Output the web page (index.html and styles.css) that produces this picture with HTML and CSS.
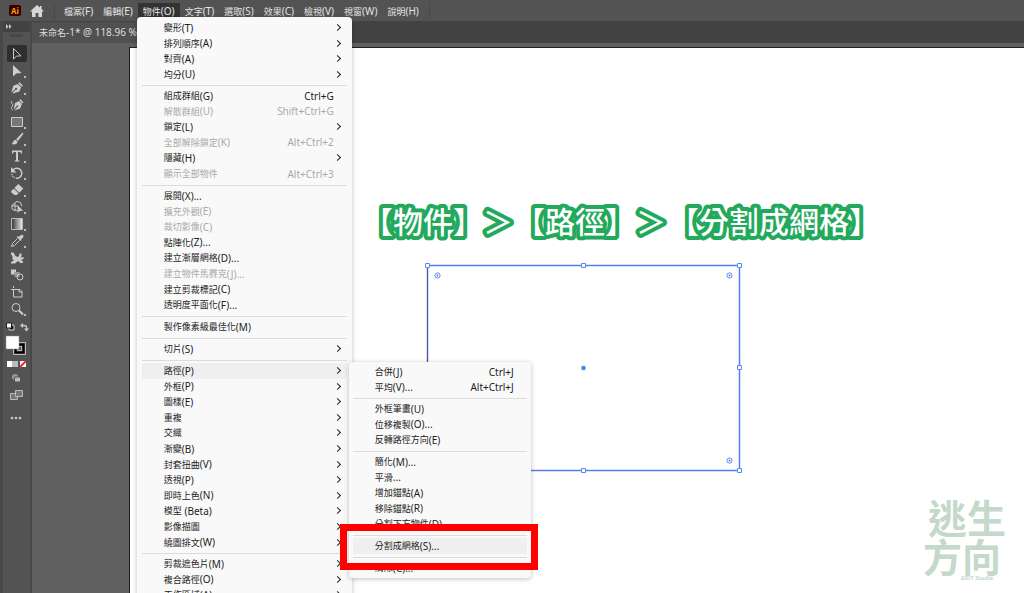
FILE: index.html
```html
<!DOCTYPE html>
<html lang="zh-Hant">
<head>
<meta charset="utf-8">
<title>未命名-1</title>
<link rel="stylesheet" href="styles.css">
</head>
<body>
<header class="menubar">
  <span class="app-logo">Ai</span>
  <button class="home" aria-label="首頁"><svg viewBox="0 0 14 12"><path d="M7 0 0 6.4h2V12h3.6V8h2.8v4H12V6.4h2L11.6 4V1H10v1.6z"/></svg></button>
  <nav class="menus">
    <button class="menu-title">檔案<kbd>(F)</kbd></button>
    <button class="menu-title">編輯<kbd>(E)</kbd></button>
    <div class="menu-anchor">
      <button class="menu-title open">物件<kbd>(O)</kbd></button>
      <div class="menu main-menu">
        <ul class="group">
          <li><button class="item more">變形<kbd>(T)</kbd></button></li>
          <li><button class="item more">排列順序<kbd>(A)</kbd></button></li>
          <li><button class="item more">對齊<kbd>(A)</kbd></button></li>
          <li><button class="item more">均分<kbd>(U)</kbd></button></li>
        </ul>
        <ul class="group">
          <li><button class="item">組成群組<kbd>(G)</kbd><kbd class="key">Ctrl+G</kbd></button></li>
          <li><button class="item" disabled>解散群組<kbd>(U)</kbd><kbd class="key">Shift+Ctrl+G</kbd></button></li>
          <li><button class="item more">鎖定<kbd>(L)</kbd></button></li>
          <li><button class="item" disabled>全部解除鎖定<kbd>(K)</kbd><kbd class="key">Alt+Ctrl+2</kbd></button></li>
          <li><button class="item more">隱藏<kbd>(H)</kbd></button></li>
          <li><button class="item" disabled>顯示全部物件<kbd class="key">Alt+Ctrl+3</kbd></button></li>
        </ul>
        <ul class="group">
          <li><button class="item">展開<kbd>(X)...</kbd></button></li>
          <li><button class="item" disabled>擴充外觀<kbd>(E)</kbd></button></li>
          <li><button class="item" disabled>裁切影像<kbd>(C)</kbd></button></li>
          <li><button class="item">點陣化<kbd>(Z)...</kbd></button></li>
          <li><button class="item">建立漸層網格<kbd>(D)...</kbd></button></li>
          <li><button class="item" disabled>建立物件馬賽克<kbd>(J)...</kbd></button></li>
          <li><button class="item">建立剪裁標記<kbd>(C)</kbd></button></li>
          <li><button class="item">透明度平面化<kbd>(F)...</kbd></button></li>
        </ul>
        <ul class="group">
          <li><button class="item">製作像素級最佳化<kbd>(M)</kbd></button></li>
        </ul>
        <ul class="group">
          <li><button class="item more">切片<kbd>(S)</kbd></button></li>
        </ul>
        <ul class="group">
          <li class="parent"><button class="item more active">路徑<kbd>(P)</kbd></button>
            <div class="menu submenu">
              <ul class="group">
                <li><button class="item">合併<kbd>(J)</kbd><kbd class="key">Ctrl+J</kbd></button></li>
                <li><button class="item">平均<kbd>(V)...</kbd><kbd class="key">Alt+Ctrl+J</kbd></button></li>
              </ul>
              <ul class="group">
                <li><button class="item">外框筆畫<kbd>(U)</kbd></button></li>
                <li><button class="item">位移複製<kbd>(O)...</kbd></button></li>
                <li><button class="item">反轉路徑方向<kbd>(E)</kbd></button></li>
              </ul>
              <ul class="group">
                <li><button class="item">簡化<kbd>(M)...</kbd></button></li>
                <li><button class="item">平滑<kbd>...</kbd></button></li>
                <li><button class="item">增加錨點<kbd>(A)</kbd></button></li>
                <li><button class="item">移除錨點<kbd>(R)</kbd></button></li>
                <li><button class="item">分割下方物件<kbd>(D)</kbd></button></li>
              </ul>
              <ul class="group">
                <li class="parent"><button class="item active">分割成網格<kbd>(S)...</kbd></button><span class="callout"></span></li>
              </ul>
              <ul class="group">
                <li><button class="item">清除<kbd>(C)...</kbd></button></li>
              </ul>
            </div>
          </li>
          <li><button class="item more">外框<kbd>(P)</kbd></button></li>
          <li><button class="item more">圖樣<kbd>(E)</kbd></button></li>
          <li><button class="item more">重複</button></li>
          <li><button class="item more">交織</button></li>
          <li><button class="item more">漸變<kbd>(B)</kbd></button></li>
          <li><button class="item more">封套扭曲<kbd>(V)</kbd></button></li>
          <li><button class="item more">透視<kbd>(P)</kbd></button></li>
          <li><button class="item more">即時上色<kbd>(N)</kbd></button></li>
          <li><button class="item more">模型<kbd>&nbsp;(Beta)</kbd></button></li>
          <li><button class="item more">影像描圖</button></li>
          <li><button class="item more">繞圖排文<kbd>(W)</kbd></button></li>
        </ul>
        <ul class="group">
          <li><button class="item more">剪裁遮色片<kbd>(M)</kbd></button></li>
          <li><button class="item more">複合路徑<kbd>(O)</kbd></button></li>
          <li><button class="item more">工作區域<kbd>(A)</kbd></button></li>
        </ul>
      </div>
    </div>
    <button class="menu-title">文字<kbd>(T)</kbd></button>
    <button class="menu-title">選取<kbd>(S)</kbd></button>
    <button class="menu-title">效果<kbd>(C)</kbd></button>
    <button class="menu-title">檢視<kbd>(V)</kbd></button>
    <button class="menu-title">視窗<kbd>(W)</kbd></button>
    <button class="menu-title">說明<kbd>(H)</kbd></button>
  </nav>
</header>
<main class="workspace">
  <aside class="toolbox">
    <div class="toolbox-head"><svg viewBox="0 0 6 5"><path d="M0 0l2.5 2.5L0 5zM3 0l2.5 2.5L3 5z"/></svg></div>
    <div class="grip"></div>
    <div class="tools">
      <button class="tool selected" aria-label="選取"><svg viewBox="0 0 14 14"><path class="line" d="M3.500 1.500v10.500l3-2.800 4.500-.4z"/></svg></button>
      <button class="tool fly" aria-label="直接選取"><svg viewBox="0 0 14 14"><path d="M3 1v11.500l3.300-3.100 5.200-.4z"/></svg></button>
      <button class="tool fly" aria-label="鋼筆"><svg viewBox="0 0 14 14"><path d="M9.300 1l3.700 3.700-1.300 1.100-3.300-3.300zM7.800 3l3.300 3.300-1.700 4.200L3 12.500l-.5-.4 3.200-3.300a1 1 0 1 0-.6-.6L1.700 11.300l-.3-.5 2-6z"/></svg></button>
      <button class="tool" aria-label="曲線"><svg viewBox="0 0 14 14"><path d="M10.300 1l3.200 3.600-1.200.9-2.900-3.200zM9 2.900l2.900 3.200-1.700 4.400-5.800 2 3-3.600a.8.800 0 1 0-.7-.6L3.700 11.500l1.300-6.500z"/><path class="line" d="M2 3c-2.500 2 2 3 .5 5s-1.700 3 .5 4"/></svg></button>
      <button class="tool fly" aria-label="矩形"><svg viewBox="0 0 14 14"><path class="line box" d="M1.500 2.500h11v9h-11z"/></svg></button>
      <button class="tool fly" aria-label="筆刷"><svg viewBox="0 0 14 14"><path d="M13 .8c.8.600.2 1.400-.3 2L8 8.900 6.200 7.300 11.500 1.500c.5-.5 1-.9 1.500-.7zM5.600 7.800l1.900 1.700c.1 2.500-2.800 3.500-6 2.600 1.700-.8 1.500-4 4.100-4.300z"/></svg></button>
      <button class="tool fly" aria-label="文字"><svg viewBox="0 0 14 14"><path d="M2 1.500h10v3h-1l-.6-1.500H8v8.200l1.500.5v.8h-5v-.8l1.500-.5V3H3.600L3 4.500H2z"/></svg></button>
      <button class="tool fly" aria-label="旋轉"><svg viewBox="0 0 14 14"><path class="line bold" d="M3 4a5 5 0 1 1 3 8.200"/><path d="M1 1v5.500h5.500z"/><path class="line bold" d="M1.800 8a5 5 0 0 0 4 4.200" stroke-dasharray="1 1"/></svg></button>
      <button class="tool fly" aria-label="橡皮擦"><svg viewBox="0 0 14 14"><path d="M8.300 1l5 4.500-4 4.200-5-4.600zM3.700 5.800l4.900 4.500-1.800 1.800H4.300L1.200 9.200V8z"/></svg></button>
      <button class="tool fly" aria-label="形狀建立程式"><svg viewBox="0 0 14 14"><path class="line" d="M7 10.500H5a3.500 3.500 0 0 1-1-6.800 4 4 0 0 1 7.500 2.500M2 6h6M5 3v7"/><path d="M7.500 5v8l2-2 3.500-.3z"/></svg></button>
      <button class="tool fly" aria-label="漸層"><svg viewBox="0 0 14 14"><defs><linearGradient id="ramp"><stop stop-color="#333"/><stop offset="1" stop-color="#eee"/></linearGradient></defs><path d="M1.500 1.500h11v11h-11z" fill="url(#ramp)" stroke="#bbb"/></svg></button>
      <button class="tool fly" aria-label="檢色滴管"><svg viewBox="0 0 14 14"><path d="M10 2c1-1.300 2.200-1.500 3-.8s.6 2-.7 3l-1.200 1.100.6.700-1 1-4-4 1-1 .8.800z"/><path class="line" d="M7.300 4.700L2.500 9.500 1.500 12.500l3-1 4.800-4.800"/></svg></button>
      <button class="tool" aria-label="操控彎曲"><svg viewBox="0 0 14 14"><path d="M1 1.500h2.500l2 3.500 2 1L9 5l.5-2.500h2V5l-1 1.500 3-.5v2L11 9l2 1.500v1.500h-2.500L8 10l-3 2.500H1V11l3-1.500L2.500 8V5L1 3.500z"/></svg></button>
      <button class="tool" aria-label="漸變"><svg viewBox="0 0 14 14"><path d="M1 1.500h5v5H1z"/><path d="M4.500 4h5v5h-5z" fill="#999"/><circle class="line" cx="10" cy="9" r="3"/></svg></button>
      <button class="tool" aria-label="工作區域"><svg viewBox="0 0 14 14"><path class="line" d="M3.500 1v2M1 4.500h9l2 2v5.500H3.500V4.500M9 4.500V7h3"/></svg></button>
      <button class="tool fly" aria-label="縮放顯示"><svg viewBox="0 0 14 14"><circle class="line" cx="6" cy="5.500" r="4"/><path class="line thick" d="M9 8.500l4 4"/></svg></button>
    </div>
    <svg class="swatches" viewBox="0 0 27 50">
      <path d="M6 5h5v5H6z" fill="#111" stroke="#ddd"/><path d="M3.500 3h5v5h-5z" fill="#fff" stroke="#222"/>
      <path d="M19 5.500h2q2.500 0 2.500 2v2" fill="none" stroke="#ccc" stroke-width="1.300"/><path d="M20 3v5l-3-2.500zM21 8.500h5L23.500 11.500z" fill="#ccc"/>
      <path d="M10.500 22.500h12v12h-12z" fill="#555" stroke="#bbb"/><path d="M12.500 24.500h8v8h-8z" fill="none" stroke="#000" stroke-width="2"/><path d="M14.500 26.500h4v4h-4z" fill="#555" stroke="#bbb"/>
      <path d="M3 16h13v13H3z" fill="#fff" stroke="#888" stroke-width=".5"/>
      <path d="M4 41h5v6H4z" fill="#fff"/><path d="M9 41h6v6H9z" fill="#bbb"/><path d="M17 41h6v6h-6z" fill="#fff"/><path d="M17 47l6-6" stroke="#e22" stroke-width="1.800"/>
    </svg>
    <svg class="modes" viewBox="0 0 27 60">
      <circle cx="12" cy="7" r="3" fill="#999"/><path d="M11.500 7h6v5h-6z" fill="#bbb" stroke="#555"/>
      <path d="M7.500 23.500h7v6h-7z" fill="#777" stroke="#bbb"/><path d="M12.500 20.500h7v6h-7z" fill="#777" stroke="#bbb"/>
      <g fill="#ccc"><circle cx="9" cy="48" r="1.300"/><circle cx="13" cy="48" r="1.300"/><circle cx="17" cy="48" r="1.300"/></g>
    </svg>
  </aside>
  <section class="document">
    <div class="tabs"><div class="tab">未命名<kbd>-1* @ 118.96 % (CMYK)</kbd></div></div>
    <div class="pasteboard">
      <div class="artboard">
        <h1 class="path-title">
          <svg viewBox="0 0 510 44">
            <text x="1" y="33">【物件】</text>
            <text x="121" y="33">＞</text>
            <text x="153" y="33">【路徑】</text>
            <text x="274" y="33">＞</text>
            <text x="307" y="33">【分割成網格】</text>
          </svg>
        </h1>
        <svg class="selection" viewBox="0 0 320 212">
          <path d="M4.500 3.500h312v205h-312z" fill="none" stroke="#4f7ff0" stroke-width="1.500"/>
          <path d="M4.500 6v200" stroke="#56579a" stroke-width="1"/>
          <g fill="#fff" stroke="#5c88f5"><path d="M2.500 1.500h4v4h-4zM158.500 1.500h4v4h-4zM314.500 1.500h4v4h-4zM314.500 103.500h4v4h-4zM158.500 206.500h4v4h-4zM314.500 206.500h4v4h-4z"/>
          <circle cx="14.500" cy="13.500" r="2.600"/><circle cx="306.500" cy="13.500" r="2.600"/><circle cx="306.500" cy="198.500" r="2.600"/></g>
          <g fill="#4f7ff0"><circle cx="14.500" cy="13.500" r="1"/><circle cx="306.500" cy="13.500" r="1"/><circle cx="306.500" cy="198.500" r="1"/><circle cx="160.500" cy="106" r="2.300"/></g>
        </svg>
        <div class="brand"><span>逃生</span><span class="shift">方向</span><small>EXIT Studio</small></div>
      </div>
    </div>
  </section>
</main>
</body>
</html>
```

FILE: styles.css
```css
* { box-sizing: border-box; }

body {
  margin: 0;
  height: 100vh;
  overflow: hidden;
  display: flex;
  flex-direction: column;
  background: #606060;
  font-family: "Noto Sans", "Noto Sans CJK TC", sans-serif;
  font-size: 9px;
}

button {
  margin: 0;
  padding: 0;
  border: 0;
  background: none;
  color: inherit;
  font: inherit;
}

kbd { font-family: inherit; font-size: 10px; }

/* Menu bar */
.menubar {
  display: flex;
  align-items: center;
  height: 22px;
  padding-left: 9px;
  background: #535353;
  border-bottom: 1px solid #444;
  color: #e4e4e4;
}

.app-logo {
  width: 12px;
  height: 11px;
  border-radius: 2px;
  background: #300;
  color: #ff9a00;
  font-size: 8px;
  font-weight: 700;
  line-height: 11px;
  text-align: center;
}

.home { display: flex; margin-left: 9px; }
.home svg { width: 14px; height: 12px; fill: #d6d6d6; }

.menus {
  display: flex;
  margin-left: 10px;
  padding: 0 5px 0 4px;
  border-left: 1px solid #484848;
  border-right: 1px solid #484848;
}

.menu-title {
  display: block;
  height: 16px;
  padding: 0 5px;
  line-height: 16px;
  white-space: nowrap;
}

.menu-title.open { background: #333; }
.menu-anchor { position: relative; }

/* Drop-down menus */
.menu {
  position: absolute;
  z-index: 2;
  padding: 3px 5px 2px;
  border-radius: 4px;
  background: #f9f9f9;
  box-shadow: 0 1px 5px rgba(0, 0, 0, .25);
  color: #1c1c1c;
}

.main-menu { top: 14px; left: -1px; width: 215px; }
.submenu { top: -1px; left: 207px; width: 182px; padding: 2px 4px; }

.group { margin: 0; padding: 0; list-style: none; }

.group + .group {
  margin-top: 3px;
  padding-top: 2px;
  border-top: 1px solid #dcdcdc;
}

.group > li { height: 16px; }
.group > li:nth-child(5n + 2),
.group > li:nth-child(5n + 4) { height: 15px; }

.parent { position: relative; }

.item {
  display: flex;
  align-items: center;
  width: 100%;
  height: 100%;
  padding: 0 13px 0 22px;
  border-radius: 2px;
  white-space: nowrap;
}

.item:disabled { color: #a9a9a9; }
.item.active { background: #efefef; }
.key { margin-left: auto; }
.item.more { padding-right: 7px; }

.more::after {
  content: "";
  width: 4px;
  height: 4px;
  margin-left: auto;
  border-top: 1px solid #222;
  border-right: 1px solid #222;
  transform: rotate(45deg);
}

.callout {
  position: absolute;
  inset: -14px -11px -16px -13px;
  border: 7px solid #f00;
}

/* Workspace */
.workspace { display: flex; flex: 1; min-height: 0; }

.toolbox {
  display: flex;
  flex-direction: column;
  align-items: center;
  width: 32px;
  border-left: 3px solid #484848;
  border-right: 2px solid #484848;
  background: #535353;
}

.toolbox-head {
  align-self: stretch;
  height: 10px;
  padding: 2px 3px;
  background: #424242;
}

.toolbox-head svg { display: block; width: 6px; height: 5px; fill: #ccc; }
.grip { width: 13px; height: 3px; margin: 2px 0 8px; background: #484848; }
.tools { display: flex; flex-direction: column; }

.tool {
  position: relative;
  display: flex;
  align-items: center;
  justify-content: center;
  width: 20px;
  height: 17px;
}

.tool svg { width: 14px; height: 14px; fill: #ccc; }
.tool .line { fill: none; stroke: #ccc; }
.tool .bold { stroke-width: 1.5; }
.tool .thick { stroke-width: 2; }
.tool .box { fill: #777; }
.tool.selected { border-radius: 2px; background: #2f2f2f; }

.fly::after {
  content: "";
  position: absolute;
  right: 1px;
  bottom: 1px;
  width: 2px;
  height: 2px;
  background: #bbb;
}

.swatches { width: 27px; height: 50px; margin-top: 3px; }
.modes { width: 27px; height: 60px; }

.document { display: flex; flex: 1; flex-direction: column; min-width: 0; }
.tabs { display: flex; height: 21px; background: #424242; }

.tab {
  padding: 0 8px 0 7px;
  background: #505050;
  color: #dcdcdc;
  line-height: 20px;
  white-space: nowrap;
}

.pasteboard {
  display: flex;
  flex: 1;
  padding: 4px 0 0 97px;
  background: #606060;
}

.artboard {
  position: relative;
  flex: 1;
  border-top: 1px solid #222;
  border-left: 1px solid #222;
  background: #fff;
}

/* Objects placed on the artboard */
.path-title {
  position: absolute;
  top: 152px;
  left: 232px;
  margin: 0;
}

.path-title svg { display: block; width: 510px; height: 44px; overflow: visible; }

.path-title text {
  fill: #fff;
  stroke: #22a95b;
  stroke-width: 8px;
  stroke-linejoin: round;
  paint-order: stroke fill;
  font-family: "Noto Sans CJK TC", sans-serif;
  font-size: 30px;
  font-weight: 500;
  text-spacing-trim: space-all;
}

.selection {
  position: absolute;
  top: 214px;
  left: 293px;
  width: 320px;
  height: 212px;
}

.brand {
  position: absolute;
  right: 18px;
  bottom: 12px;
  display: flex;
  flex-direction: column;
  color: #c5d9ca;
  font-family: "Noto Sans CJK TC", sans-serif;
  font-size: 39px;
  font-style: oblique 12deg;
  font-weight: 700;
  line-height: 39px;
}

.brand .shift { margin-left: -5px; }

.brand small {
  align-self: flex-end;
  padding-right: 13px;
  font-family: "Open Sans", sans-serif;
  font-size: 6px;
  font-weight: 700;
  line-height: 6px;
}
```
